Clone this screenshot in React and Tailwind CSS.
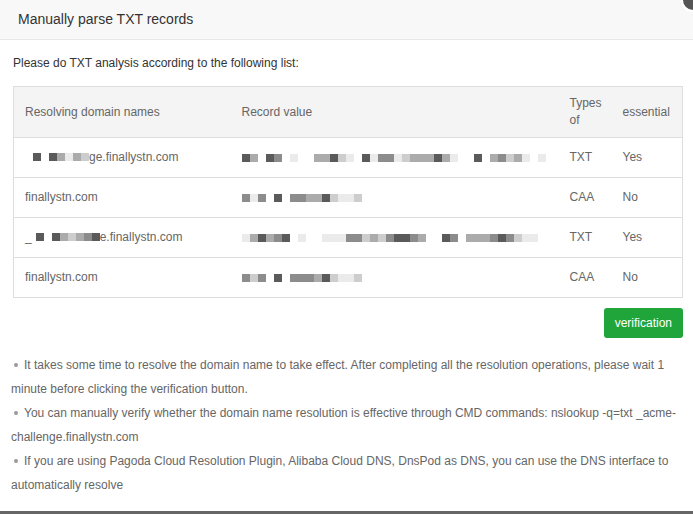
const cellColor = {
  d: 'bg-[#5a5a5a]',
  m: 'bg-[#8c8c8c]',
  l: 'bg-[#ababab]',
  x: 'bg-[#cdcdcd]',
  e: 'bg-[#ebebeb]',
  ' ': 'bg-transparent',
}

// pixelated (masked) text, one char per 8px cell
function Masked({ code }) {
  return (
    <span className="inline-flex items-center align-middle">
      {code.split('').map((c, i) => (
        <span key={i} className={`inline-block h-[8px] w-[8px] ${cellColor[c]}`} />
      ))}
    </span>
  )
}

const rows = [
  {
    domain: (
      <span className="inline-flex items-center">
        <Masked code=" d dlelx" />
        <span>ge.finallystn.com</span>
      </span>
    ),
    value: 'dl dm e  lldxe demmexllldle  d lmxle e',
    type: 'TXT',
    need: 'Yes',
  },
  { domain: 'finallystn.com', value: 'mem d mmlldxeex', type: 'CAA', need: 'No' },
  {
    domain: (
      <span className="inline-flex items-center">
        <span className="mr-[4px]">_</span>
        <Masked code="d dlxlmd" />
        <span>e.finallystn.com</span>
      </span>
    ),
    value: 'eldlmd e  eeemmxlxmddml  dm lllmdmxee',
    type: 'TXT',
    need: 'Yes',
  },
  { domain: 'finallystn.com', value: 'mxm d mmmldxeex', type: 'CAA', need: 'No' },
]

const tips = [
  'It takes some time to resolve the domain name to take effect. After completing all the resolution operations, please wait 1 minute before clicking the verification button.',
  'You can manually verify whether the domain name resolution is effective through CMD commands: nslookup -q=txt _acme-challenge.finallystn.com',
  'If you are using Pagoda Cloud Resolution Plugin, Alibaba Cloud DNS, DnsPod as DNS, you can use the DNS interface to automatically resolve',
]

export default function App() {
  return (
    <div
      className="relative flex h-[514px] w-[693px] flex-col overflow-hidden bg-white text-[12px] text-[#666]"
      style={{ fontFamily: '"Liberation Sans", Arial, sans-serif' }}
    >
      <div className="flex h-[40px] shrink-0 items-start justify-between border-b border-[#e8e8e8] bg-[#f8f8f8] pl-[18px] text-[14px] text-[#333]">
        <span className="leading-[39px]">Manually parse TXT records</span>
        {/* close button, cut off by the window corner */}
        <svg width="14" height="14" viewBox="0 0 14 14" className="block shrink-0">
          <circle cx="14" cy="0" r="12" fill="#ffffff" />
          <circle cx="14" cy="0" r="10" fill="#555555" />
        </svg>
      </div>

      <div className="flex-1 pl-[13px] pr-[10px] pt-[14px]">
        <p className="leading-[18px] text-[#333]">Please do TXT analysis according to the following list:</p>

        <table className="mt-[14px] w-full table-fixed border-collapse border border-[#ddd]">
          <colgroup>
            <col className="w-[217px]" />
            <col className="w-[328px]" />
            <col className="w-[53px]" />
            <col />
          </colgroup>
          <thead>
            <tr className="h-[51px] bg-[#f4f4f4] text-left">
              <th className="pl-[11px] font-normal">Resolving domain names</th>
              <th className="pl-[11px] font-normal">Record value</th>
              <th className="pl-[11px] font-normal leading-[17px]">Types of</th>
              <th className="pl-[11px] font-normal">essential</th>
            </tr>
          </thead>
          <tbody>
            {rows.map((r, i) => (
              <tr key={i} className="h-[40px] border-t border-[#ddd]">
                <td className="pb-[1px] pl-[11px]">{r.domain}</td>
                <td className="pb-[1px] pl-[11px]">
                  <Masked code={r.value} />
                </td>
                <td className="pb-[1px] pl-[11px]">{r.type}</td>
                <td className="pb-[1px] pl-[11px]">{r.need}</td>
              </tr>
            ))}
          </tbody>
        </table>

        <div className="mt-[10px] flex justify-end">
          <button
            type="button"
            className="h-[30px] rounded-[3px] bg-[#20a53a] px-[11px] text-[12px] text-white"
          >
            verification
          </button>
        </div>

        <ul className="mt-[15px] leading-[24px] text-[#666]">
          {tips.map((t, i) => (
            <li key={i} className="-ml-[2px]">
              <span className="mb-[2px] ml-[3px] mr-[6px] inline-block h-[4px] w-[4px] rounded-full bg-[#999] align-middle" />
              {t}
            </li>
          ))}
        </ul>
      </div>

      <div className="h-[3px] shrink-0 bg-[#666]" />
    </div>
  )
}
